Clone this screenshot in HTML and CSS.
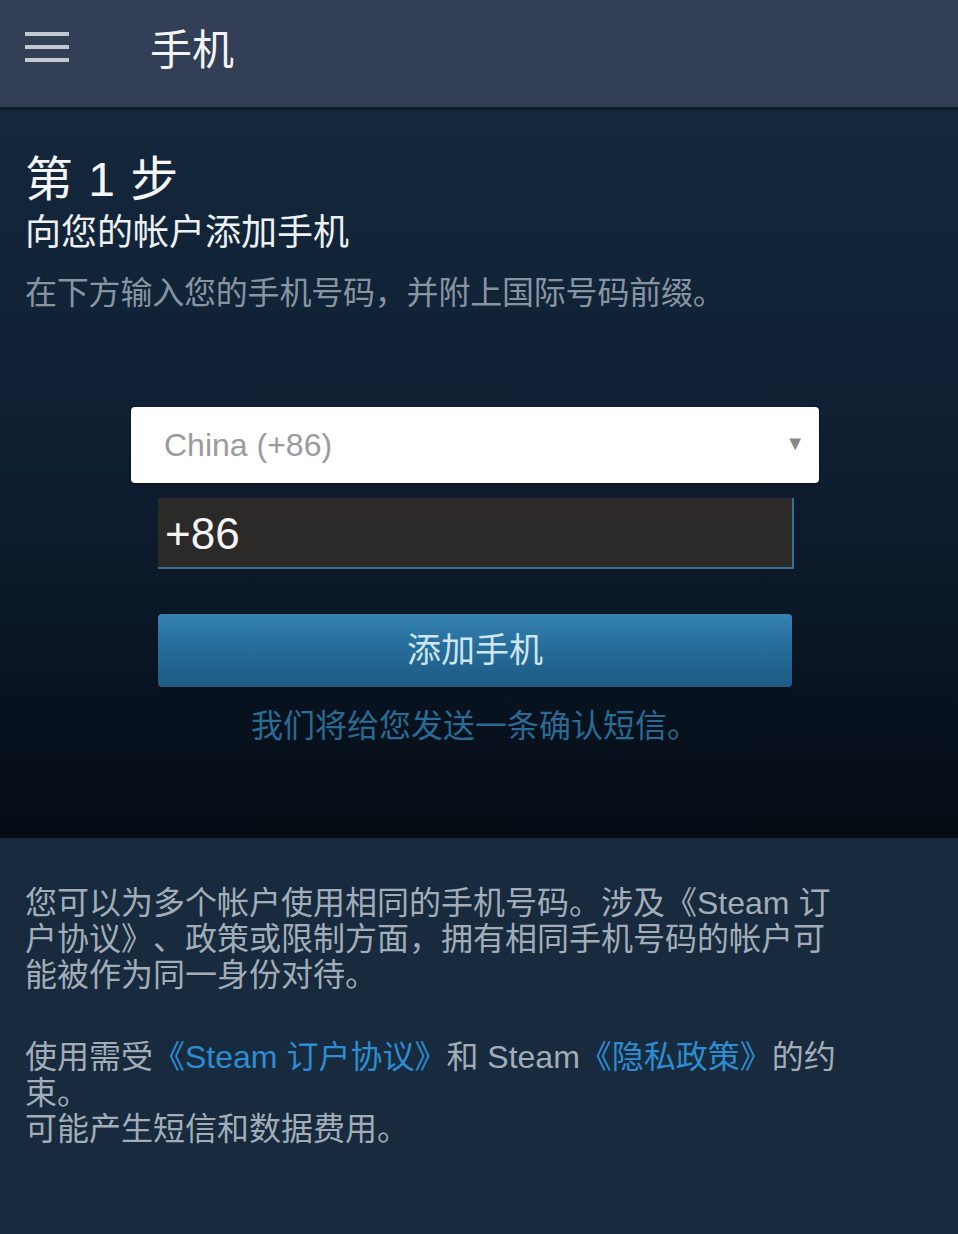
FILE: index.html
```html
<!DOCTYPE html>
<html lang="zh-CN">

<head>
    <meta charset="UTF-8">
    <meta name="viewport" content="width=device-width, initial-scale=1.0">
    <title>手机</title>
    <link rel="stylesheet" href="styles.css">
</head>

<body>
<header class="top-bar">
    <svg class="menu-icon" width="44" height="32" viewBox="0 0 44 32">
        <rect x="0" y="1" width="44" height="4" fill="#c3c9d1"/>
        <rect x="0" y="14" width="44" height="4" fill="#c3c9d1"/>
        <rect x="0" y="27" width="44" height="4" fill="#c3c9d1"/>
    </svg>
    <h1 class="top-title">手机</h1>
</header>

<main class="step-panel">
    <h2 class="step-num">第 1 步</h2>
    <h3 class="step-title">向您的帐户添加手机</h3>
    <p class="step-hint">在下方输入您的手机号码，并附上国际号码前缀。</p>

    <div class="phone-form">
        <div class="country-select">
            <span>China (+86)</span>
            <span class="select-arrow">&#9660;</span>
        </div>
        <div class="phone-input">+86</div>
        <button class="add-btn">添加手机</button>
        <p class="sms-note">我们将给您发送一条确认短信。</p>
    </div>
</main>

<section class="info-panel">
    <p class="info-text">您可以为多个帐户使用相同的手机号码。涉及《Steam 订户协议》、政策或限制方面，拥有相同手机号码的帐户可能被作为同一身份对待。</p>
    <p class="info-text">使用需受<a href="#">《Steam 订户协议》</a>和 Steam<a href="#">《隐私政策》</a>的约束。<br>可能产生短信和数据费用。</p>
</section>
</body>

</html>
```

FILE: styles.css
```css
* {
    box-sizing: border-box;
}

body {
    margin: 0;
    background-color: #172a3e;
    font-family: "Liberation Sans", "Noto Sans CJK SC", sans-serif;
    color: #fff;
    text-spacing-trim: space-all;
}

h1, h2, h3, p {
    margin: 0;
    font-weight: normal;
}

.top-bar {
    height: 110px;
    background-color: #323f56;
    border-bottom: 3px solid #0f1c2a;
    display: flex;
    align-items: center;
    padding: 0 0 14px 25px;
}

.menu-icon {
    display: block;
}

.top-title {
    margin-left: 81px;
    font-size: 42px;
    color: #f2f4f6;
}

.step-panel {
    height: 728px;
    background: linear-gradient(to bottom, #14273b 0%, #0f2033 45%, #081320 80%, #050c14 100%);
    padding: 42px 0 0 25px;
}

.step-num {
    font-size: 48px;
    line-height: 56px;
    word-spacing: 2px;
    color: #f4f6f8;
}

.step-title {
    font-size: 36px;
    line-height: 50px;
    color: #eef1f4;
}

.step-hint {
    margin-top: 15px;
    font-size: 32px;
    line-height: 40px;
    letter-spacing: -0.2px;
    color: #8795a3;
}

.phone-form {
    margin: 94px 0 0 106px;
    width: 688px;
    display: flex;
    flex-direction: column;
}

.country-select {
    height: 76px;
    background-color: #fff;
    border-radius: 4px;
    box-shadow: 0 1px 3px rgba(0, 0, 0, 0.6);
    display: flex;
    align-items: center;
    justify-content: space-between;
    padding: 0 14px 0 33px;
    font-size: 32px;
    color: #9b9b9b;
}

.select-arrow {
    font-size: 20px;
    color: #888;
    margin-bottom: 4px;
}

.phone-input {
    margin: 15px 0 0 27px;
    width: 636px;
    height: 71px;
    background-color: #2b2a28;
    border-right: 2px solid #3a6f95;
    border-bottom: 2px solid #3a6f95;
    padding: 10px 0 0 7px;
    font-size: 44px;
    line-height: 52px;
    color: #f4f4f4;
}

.add-btn {
    margin: 45px 0 0 27px;
    width: 634px;
    height: 73px;
    border: none;
    border-radius: 4px;
    background: linear-gradient(to bottom, #3483b3 0%, #286f9d 40%, #1c5a82 100%);
    box-shadow: 0 1px 2px rgba(0, 0, 0, 0.5);
    font-family: "Liberation Sans", "Noto Sans CJK SC", sans-serif;
    font-size: 34px;
    padding-bottom: 8px;
    color: #cfe6f4;
    cursor: pointer;
}

.sms-note {
    margin-top: 18px;
    text-align: center;
    font-size: 32px;
    line-height: 42px;
    color: #2a6a93;
}

.info-panel {
    padding: 47px 0 0 25px;
    width: 845px;
}

.info-text {
    font-size: 32px;
    line-height: 36px;
    color: #a3adb8;
    margin-bottom: 46px;
}

.info-text a {
    color: #2d8dd0;
    text-decoration: none;
}
```
